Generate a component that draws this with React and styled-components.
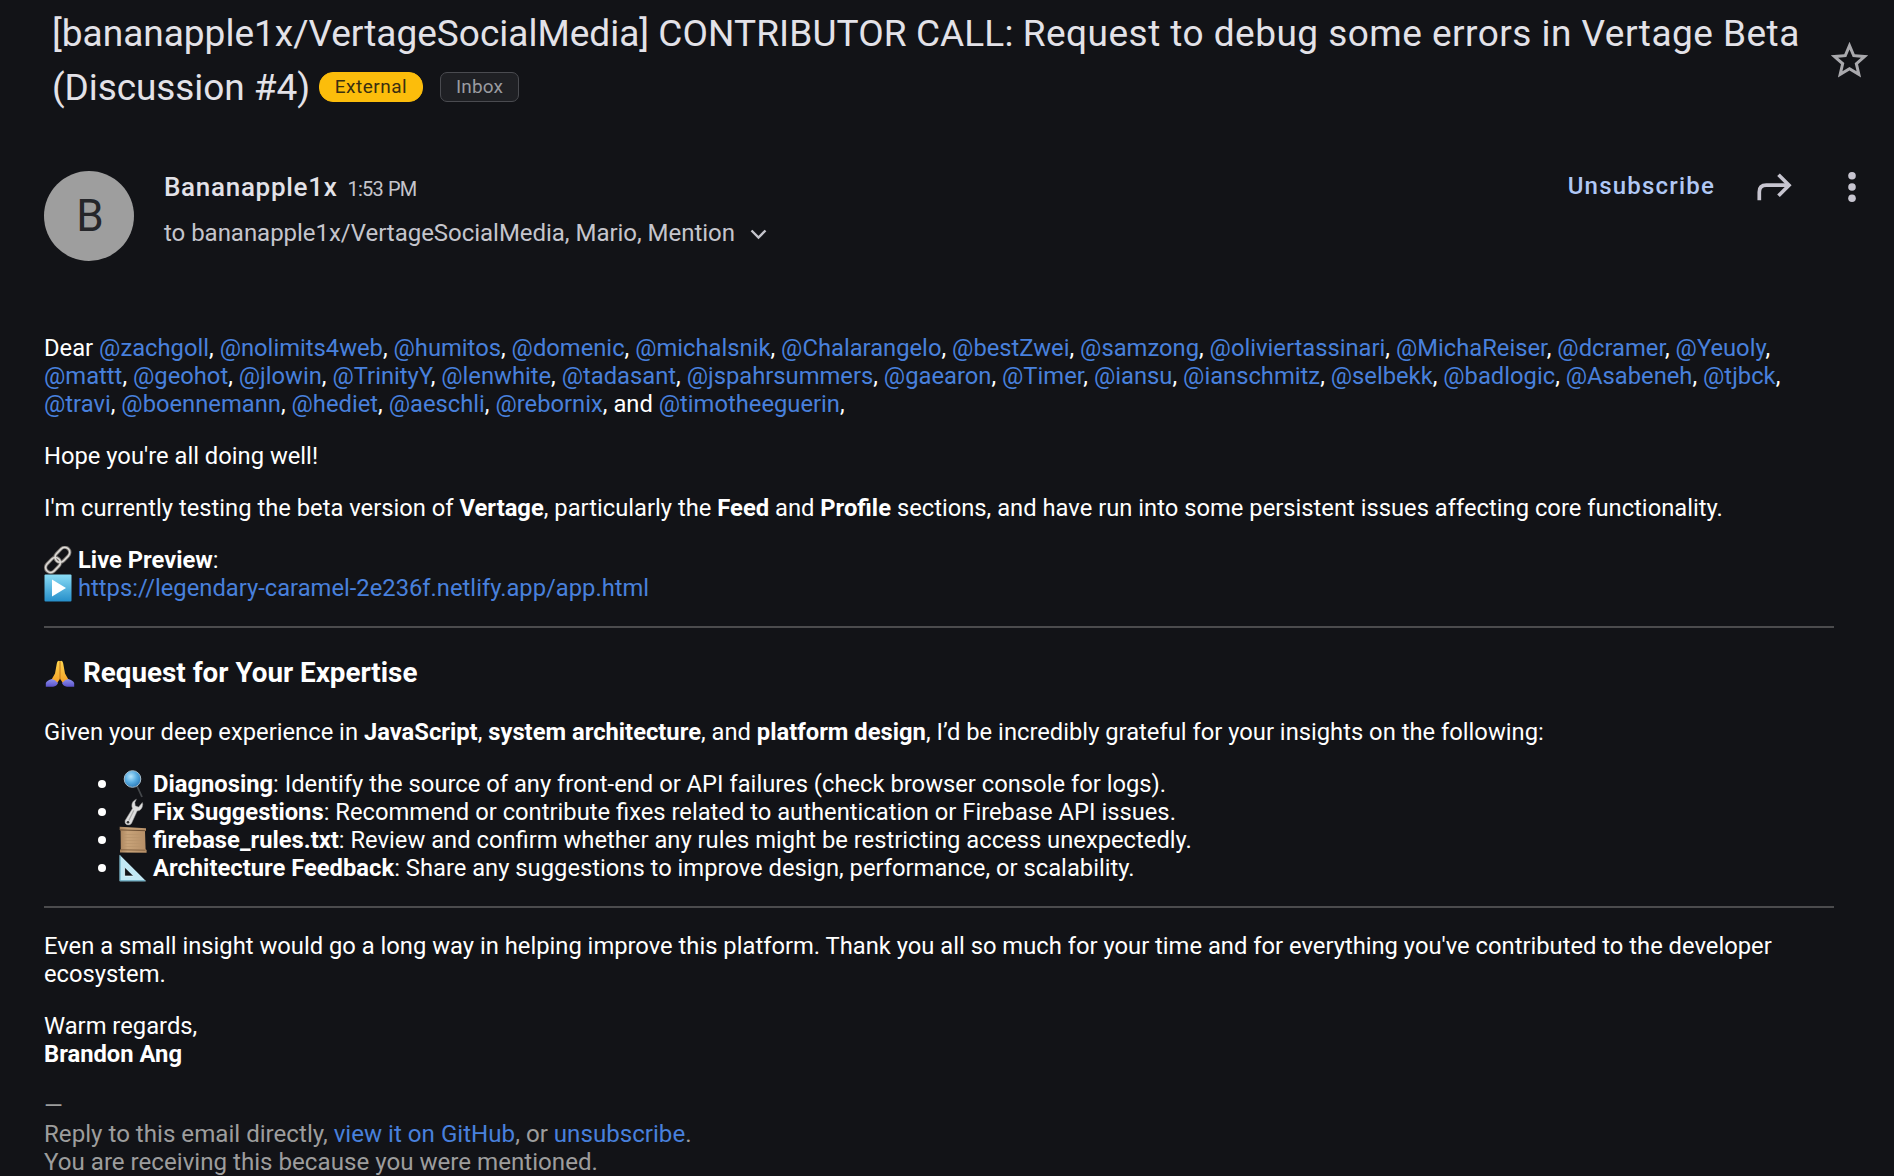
import React from "react";
import styled, { createGlobalStyle } from "styled-components";

const GlobalStyle = createGlobalStyle`
  * {
    box-sizing: border-box;
  }
  body {
    margin: 0;
    background: #121317;
    color: #fff;
    font-family: Roboto, "Liberation Sans", sans-serif;
    overflow: hidden;
  }
`;

const Page = styled.main`
  width: 1894px;
  height: 1176px;
  overflow: hidden;
`;

const SubjectBar = styled.header`
  display: flex;
  justify-content: space-between;
  height: 171px;
  padding: 7px 22px 0 52px;
`;

const Subject = styled.h1`
  margin: 0;
  font-size: 37px;
  font-weight: 400;
  line-height: 54px;
  color: #e3e2e8;
  white-space: nowrap;
`;

const SubjectLine = styled.div`
  display: flex;
  align-items: center;
  white-space: pre;
`;

const SubjectText = styled.span`
  letter-spacing: ${(p) => p.$spacing || "0"};
`;

const Tag = styled.span`
  display: flex;
  align-items: center;
  justify-content: center;
  width: ${(p) => p.$width};
  height: 30px;
  margin-left: ${(p) => p.$gap};
  margin-bottom: 2px;
  border: 1px solid ${(p) => p.$border};
  border-radius: ${(p) => p.$radius};
  background: ${(p) => p.$background};
  color: ${(p) => p.$color};
  font-size: 19px;
  line-height: 28px;
  letter-spacing: ${(p) => p.$spacing};
`;

const StarButton = styled.div`
  display: flex;
  padding-top: 31px;
`;

const Sender = styled.section`
  display: flex;
  height: 163px;
  padding: 0 36px 0 44px;
`;

const Avatar = styled.div`
  width: 90px;
  height: 90px;
  padding-left: 2px;
  border-radius: 50%;
  background: #9e9e9e;
  color: #25262a;
  font-size: 44px;
  line-height: 90px;
  text-align: center;
`;

const SenderInfo = styled.div`
  flex: 1;
  padding-left: 30px;
`;

const NameRow = styled.div`
  display: flex;
  align-items: baseline;
  height: 46px;
  line-height: 32px;
  gap: 10px;
`;

const Name = styled.span`
  font-size: 26px;
  font-weight: 500;
  letter-spacing: 0.7px;
  color: #e3e2e8;
`;

const Time = styled.span`
  font-size: 20px;
  letter-spacing: -0.8px;
  word-spacing: 1px;
  color: #c5c5cc;
`;

const Recipients = styled.div`
  display: flex;
  align-items: center;
  gap: 12px;
  font-size: 24px;
  line-height: 32px;
  letter-spacing: -0.03px;
  color: #c5c5cc;
`;

const Actions = styled.div`
  display: flex;
  align-items: center;
  height: 31px;
`;

const Unsubscribe = styled.span`
  margin: 0 41px 2px 0;
  color: #b0c8f5;
  font-size: 24px;
  font-weight: 500;
  letter-spacing: 1.2px;
`;

const ForwardButton = styled.div`
  display: flex;
  margin-right: 55px;
`;

const MoreButton = styled.div`
  display: flex;
  margin-right: 1px;
`;

const Body = styled.article`
  margin: 0 60px 0 44px;
  font-size: 23.75px;
  line-height: 28px;
`;

const Paragraph = styled.p`
  margin: 0 0 24px;
`;

const Footer = styled(Paragraph)`
  font-size: 24.13px;
  color: #9d9d9d;
`;

const Line = styled.span`
  display: block;
  white-space: nowrap;
`;

const Link = styled.span`
  color: #4880dc;
`;

const Bold = styled.strong`
  font-weight: 700;
`;

const Divider = styled.hr`
  height: 2px;
  margin: 0 0 ${(p) => p.$after};
  border: 0;
  background: #4b4b4d;
`;

const Heading = styled.h3`
  margin: 0 0 29px;
  font-size: 27.8px;
  line-height: 33px;
`;

const List = styled.ul`
  margin: 0 0 24px;
  padding: 0;
  list-style: none;
`;

const Item = styled.li`
  display: flex;
  align-items: center;
  height: 28px;
  padding-left: 54px;
  white-space: pre;

  &::before {
    content: "";
    width: 8px;
    height: 8px;
    margin-right: 13px;
    border-radius: 50%;
    background: #fff;
  }
`;

const Emoji = styled.svg`
  width: ${(p) => p.$size || 28}px;
  height: 28px;
  margin-right: ${(p) => p.$gap || 6}px;
  vertical-align: -6px;
  flex: none;
`;

const StarIcon = () => (
  <svg width="45" height="45" viewBox="0 0 24 24" fill="#a9a9ad">
    <path d="M22 9.24l-7.19-.62L12 2 9.19 8.63 2 9.24l5.46 4.73L5.82 21 12 17.27 18.18 21l-1.63-7.03L22 9.24zM12 15.4l-3.76 2.27 1-4.28-3.32-2.88 4.38-.38L12 6.1l1.71 4.04 4.38.38-3.32 2.88 1 4.28L12 15.4z" />
  </svg>
);

const ForwardIcon = () => (
  <svg width="36" height="30" viewBox="0 0 36 30" fill="none" stroke="#c7c5d0" strokeWidth="3.7">
    <path d="M3.3 28.3V20q0-6.8 7-6.8H33" />
    <path d="M22.5 2.7L33 13.2 22.5 23.8" />
  </svg>
);

const MoreIcon = () => (
  <svg width="10" height="32" viewBox="0 0 10 32" fill="#c7c5d0">
    <circle cx="5" cy="4.8" r="3.8" />
    <circle cx="5" cy="16" r="3.8" />
    <circle cx="5" cy="27.2" r="3.8" />
  </svg>
);

const ChevronIcon = () => (
  <svg width="24" height="16" viewBox="0 0 24 16" fill="none" stroke="#c5c5cc" strokeWidth="2.4">
    <path d="M4.5 5.500l7 7 7-7" />
  </svg>
);

const ChainEmoji = () => (
  <Emoji viewBox="0 0 28 28" fill="none">
    <g stroke="#77736f" strokeWidth="3.4">
      <rect x="-8.4" y="-5" width="16.8" height="10" rx="5" transform="translate(18.4 8.8) rotate(-46)" />
      <rect x="-8.4" y="-5" width="16.8" height="10" rx="5" transform="translate(9 19) rotate(-46)" />
    </g>
    <g stroke="#dedbd7" strokeWidth="1.6">
      <rect x="-8.4" y="-5" width="16.8" height="10" rx="5" transform="translate(18.4 8.8) rotate(-46)" />
      <rect x="-8.4" y="-5" width="16.8" height="10" rx="5" transform="translate(9 19) rotate(-46)" />
    </g>
  </Emoji>
);

const PlayEmoji = () => (
  <Emoji viewBox="0 0 28 28">
    <defs>
      <linearGradient id="play" x1="0" y1="0" x2="0" y2="1">
        <stop offset="0" stopColor="#8adcf5" />
        <stop offset="1" stopColor="#268fca" />
      </linearGradient>
    </defs>
    <rect x="0.5" y="0.5" width="27" height="27" rx="1" fill="url(#play)" />
    <path d="M8 5.5v17L22 14z" fill="#fff" />
  </Emoji>
);

const PrayEmoji = () => (
  <Emoji viewBox="0 0 32 28" $size={32} $gap={7}>
    <defs>
      <linearGradient id="hands" x1="0" y1="0" x2="0" y2="1">
        <stop offset="0" stopColor="#ffd64e" />
        <stop offset="1" stopColor="#f39a24" />
      </linearGradient>
      <linearGradient id="sleeve" x1="0" y1="0" x2="0" y2="1">
        <stop offset="0" stopColor="#8f92f0" />
        <stop offset="1" stopColor="#5a51c8" />
      </linearGradient>
    </defs>
    <path d="M14.8.8q-1.7 0-2 2.6L11 13.5 7 20.5l5 4.5 4-6.5 4 6.5 5-4.5-4-7L19.2 3.4q-.3-2.6-2-2.6L16 1.2z" fill="url(#hands)" />
    <path d="M16 1.5v18" stroke="#c4741a" strokeWidth="1" />
    <path d="M7.8 19Q3 20.5 1.8 23v3.8H9q4-.8 5-3.8-3-3.3-6.2-4z" fill="url(#sleeve)" />
    <path d="M24.2 19q4.8 1.500 6 4v3.8H23q-4-.8-5-3.8 3-3.3 6.2-4z" fill="url(#sleeve)" />
  </Emoji>
);

const LensEmoji = () => (
  <Emoji viewBox="0 0 28 28">
    <defs>
      <radialGradient id="lens" cx="0.4" cy="0.35" r="0.7">
        <stop offset="0" stopColor="#b5e4fb" />
        <stop offset="0.5" stopColor="#5aaee3" />
        <stop offset="1" stopColor="#2876b4" />
      </radialGradient>
    </defs>
    <path d="M18 16l5 11" stroke="#45484c" strokeWidth="1.8" />
    <circle cx="13.5" cy="9" r="8.3" fill="url(#lens)" stroke="#a6bdcc" strokeWidth="1" />
  </Emoji>
);

const WrenchEmoji = () => (
  <Emoji viewBox="0 0 28 28">
    <path
      d="M17.4 1.2q-5 2-4.6 7l.6 2.3-7.3 12q-.8 3 1.6 4.2 3 1 4.8-1.2l5.7-12.4q5.2-.7 5.6-6.9l-.5-1.7-3.7 4.6-3.3-1.3-.4-3.3z"
      fill="#dedede"
      stroke="#8c8c8c"
      strokeWidth="0.5"
    />
    <path d="M14.8 12.5L9.8 22.5" stroke="#aaa" strokeWidth="1.2" />
    <circle cx="9" cy="24.2" r="1.3" fill="#333" />
  </Emoji>
);

const ScrollEmoji = () => (
  <Emoji viewBox="0 0 28 28">
    <defs>
      <linearGradient id="paper" x1="0" y1="0" x2="1" y2="0">
        <stop offset="0" stopColor="#a9835c" />
        <stop offset="0.3" stopColor="#c8a379" />
        <stop offset="1" stopColor="#b58e66" />
      </linearGradient>
    </defs>
    <path d="M.7.8l26.3 1.4v2.6l-1 .3.6 18.2 1 .8v2.6L1 26.5v-2.6l.8-.7L1.6 4.5l-.9-.6z" fill="url(#paper)" />
    <path d="M1 3.9l25.5.8" stroke="#6d5034" strokeWidth="1" />
    <path d="M1.5 23.8l25 .4" stroke="#836242" strokeWidth="1" />
    <path d="M5 8.5h18M5 11.5h18M5 14.5h18M5 17.5h18M5 20.5h18" stroke="#b8936c" strokeWidth="0.7" />
  </Emoji>
);

const TriangleEmoji = () => (
  <Emoji viewBox="0 0 28 28">
    <path d="M.6.7v26.5h26.6zM5.6 13.5l8.6 8.6H5.6z" fill="#c3e9f5" fillRule="evenodd" />
    <path d="M1 1.5v25.3h25" fill="none" stroke="#5a9fb5" strokeWidth="1" />
    <path d="M5.6 13.5v8.6h8.6" fill="none" stroke="#e9fbff" strokeWidth="0.8" />
  </Emoji>
);

const mentionLines = [
  [
    "zachgoll",
    "nolimits4web",
    "humitos",
    "domenic",
    "michalsnik",
    "Chalarangelo",
    "bestZwei",
    "samzong",
    "oliviertassinari",
    "MichaReiser",
    "dcramer",
    "Yeuoly",
  ],
  [
    "mattt",
    "geohot",
    "jlowin",
    "TrinityY",
    "lenwhite",
    "tadasant",
    "jspahrsummers",
    "gaearon",
    "Timer",
    "iansu",
    "ianschmitz",
    "selbekk",
    "badlogic",
    "Asabeneh",
    "tjbck",
  ],
  ["travi", "boennemann", "hediet", "aeschli", "rebornix"],
];

const requests = [
  {
    icon: <LensEmoji />,
    title: "Diagnosing",
    text: "Identify the source of any front-end or API failures (check browser console for logs).",
  },
  {
    icon: <WrenchEmoji />,
    title: "Fix Suggestions",
    text: "Recommend or contribute fixes related to authentication or Firebase API issues.",
  },
  {
    icon: <ScrollEmoji />,
    title: "firebase_rules.txt",
    text: "Review and confirm whether any rules might be restricting access unexpectedly.",
  },
  {
    icon: <TriangleEmoji />,
    title: "Architecture Feedback",
    text: "Share any suggestions to improve design, performance, or scalability.",
  },
];

function Mentions({ names }) {
  return names.map((name) => (
    <React.Fragment key={name}>
      <Link>@{name}</Link>,{" "}
    </React.Fragment>
  ));
}

function App() {
  return (
    <Page>
      <GlobalStyle />
      <SubjectBar>
        <Subject>
          <SubjectLine>
            <SubjectText>[bananapple1x/VertageSocialMedia] </SubjectText>
            <SubjectText $spacing="0.1px">CONTRIBUTOR CALL: </SubjectText>
            <SubjectText $spacing="0.47px">
              Request to debug some errors in Vertage Beta
            </SubjectText>
          </SubjectLine>
          <SubjectLine>
            <SubjectText $spacing="-0.08px">(Discussion #4)</SubjectText>
            <Tag
              $width="104px"
              $gap="9px"
              $radius="14px"
              $background="#fcbd0b"
              $border="#fcbd0b"
              $color="#3a2f10"
              $spacing="0.5px"
            >
              External
            </Tag>
            <Tag
              $width="79px"
              $gap="17px"
              $radius="7px"
              $background="#1f2024"
              $border="#4a4b50"
              $color="#9a9ba0"
              $spacing="0.1px"
            >
              Inbox
            </Tag>
          </SubjectLine>
        </Subject>
        <StarButton>
          <StarIcon />
        </StarButton>
      </SubjectBar>
      <Sender>
        <Avatar>B</Avatar>
        <SenderInfo>
          <NameRow>
            <Name>Bananapple1x</Name>
            <Time>1:53 PM</Time>
          </NameRow>
          <Recipients>
            to bananapple1x/VertageSocialMedia, Mario, Mention
            <ChevronIcon />
          </Recipients>
        </SenderInfo>
        <Actions>
          <Unsubscribe>Unsubscribe</Unsubscribe>
          <ForwardButton>
            <ForwardIcon />
          </ForwardButton>
          <MoreButton>
            <MoreIcon />
          </MoreButton>
        </Actions>
      </Sender>
      <Body>
        <Paragraph>
          <Line>
            Dear <Mentions names={mentionLines[0]} />
          </Line>
          <Line>
            <Mentions names={mentionLines[1]} />
          </Line>
          <Line>
            <Mentions names={mentionLines[2]} />
            and <Link>@timotheeguerin</Link>,
          </Line>
        </Paragraph>
        <Paragraph>
          <Line>Hope you're all doing well!</Line>
        </Paragraph>
        <Paragraph>
          <Line>
            I'm currently testing the beta version of <Bold>Vertage</Bold>,
            particularly the <Bold>Feed</Bold> and <Bold>Profile</Bold>{" "}
            sections, and have run into some persistent issues affecting core
            functionality.
          </Line>
        </Paragraph>
        <Paragraph>
          <Line>
            <ChainEmoji />
            <Bold>Live Preview</Bold>:
          </Line>
          <Line>
            <PlayEmoji />
            <Link>https://legendary-caramel-2e236f.netlify.app/app.html</Link>
          </Line>
        </Paragraph>
        <Divider $after="28px" />
        <Heading>
          <Line>
            <PrayEmoji />
            Request for Your Expertise
          </Line>
        </Heading>
        <Paragraph>
          <Line>
            Given your deep experience in <Bold>JavaScript</Bold>,{" "}
            <Bold>system architecture</Bold>, and <Bold>platform design</Bold>,
            I’d be incredibly grateful for your insights on the following:
          </Line>
        </Paragraph>
        <List>
          {requests.map(({ icon, title, text }) => (
            <Item key={title}>
              {icon}
              <Bold>{title}</Bold>: {text}
            </Item>
          ))}
        </List>
        <Divider $after="24px" />
        <Paragraph>
          <Line>
            Even a small insight would go a long way in helping improve this
            platform. Thank you all so much for your time and for everything
            you've contributed to the developer
          </Line>
          <Line>ecosystem.</Line>
        </Paragraph>
        <Paragraph>
          <Line>Warm regards,</Line>
          <Line>
            <Bold>Brandon Ang</Bold>
          </Line>
        </Paragraph>
        <Footer>
          <Line>—</Line>
          <Line>
            Reply to this email directly, <Link>view it on GitHub</Link>, or{" "}
            <Link>unsubscribe</Link>.
          </Line>
          <Line>You are receiving this because you were mentioned.</Line>
        </Footer>
      </Body>
    </Page>
  );
}

export default App;
